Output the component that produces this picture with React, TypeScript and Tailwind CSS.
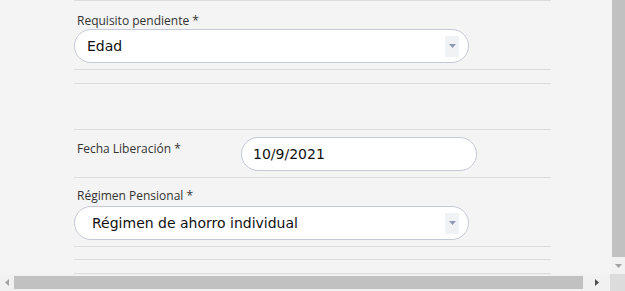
const Line = ({ className = "" }: { className?: string }) => (
  <div className={`h-px w-[477px] bg-[#dcdcdc] ${className}`} />
);

const Label = ({ children, className = "" }: { children: React.ReactNode; className?: string }) => (
  <div
    className={`h-4 pl-[3px] text-[12px] leading-4 text-[#333] ${className}`}
    style={{ fontFamily: '"Open Sans", sans-serif' }}
  >
    {children}
  </div>
);

const Select = ({ value, padLeft }: { value: string; padLeft: string }) => (
  <div
    className={`flex h-[34px] w-[395px] items-center justify-between rounded-full border border-[#c5c9d6] bg-white ${padLeft} pr-[9px]`}
  >
    <span className="text-[14px] text-[#111]" style={{ fontFamily: '"DejaVu Sans", Verdana, sans-serif' }}>
      {value}
    </span>
    <span className="flex h-[21px] w-[14px] items-center justify-center bg-[#f1f2f4]">
      <svg width="7" height="4" viewBox="0 0 7 4">
        <path d="M0 0h7L3.5 4z" fill="#8e9ab5" />
      </svg>
    </span>
  </div>
);

export default function App() {
  return (
    <div className="flex h-[291px] w-[625px] flex-col overflow-hidden bg-[#f4f4f4]">
      <div className="flex h-[274px]">
        <div className="flex-1 pl-[74px]">
          <Line />
          <Label className="mt-[12px]">Requisito pendiente *</Label>
          <Select value="Edad" padLeft="pl-[12px]" />
          <Line className="mt-[6px]" />
          <Line className="mt-[13px]" />
          <Line className="mt-[45px]" />
          <div className="flex h-[41px] w-[477px]">
            <Label className="mt-[11px] w-[167px]">Fecha Liberación *</Label>
            <div className="mt-[7px] flex h-[34px] w-[236px] items-center rounded-full border border-[#c5c9d6] bg-white pl-[11px]">
              <span className="text-[14px] text-[#111]" style={{ fontFamily: '"DejaVu Sans", Verdana, sans-serif' }}>
                10/9/2021
              </span>
            </div>
          </div>
          <Line className="mt-[6px]" />
          <Label className="mt-[10px]">Régimen Pensional *</Label>
          <div className="mt-[2px]">
            <Select value="Régimen de ahorro individual" padLeft="pl-[17px]" />
          </div>
          <Line className="mt-[6px]" />
          <Line className="mt-[12px]" />
          <Line className="mt-[13px]" />
        </div>
        <div className="flex w-[15px] flex-col pl-[2px]">
          <div className="flex-1 bg-[#c1c1c1]" />
          <div className="flex h-[17px] items-center justify-center bg-[#f1f1f1]">
            <svg width="7" height="4" viewBox="0 0 7 4">
              <path d="M0 0h7L3.5 4z" fill="#a3a3a3" />
            </svg>
          </div>
        </div>
      </div>
      <div className="flex h-[17px] bg-[#f1f1f1]">
        <div className="flex w-[14px] items-center justify-center">
          <svg width="4" height="7" viewBox="0 0 4 7">
            <path d="M4 0v7L0 3.5z" fill="#a3a3a3" />
          </svg>
        </div>
        <div className="mt-[2px] h-[13px] w-[569px] bg-[#c1c1c1]" />
        <div className="flex w-[27px] items-center justify-center">
          <svg width="4" height="7" viewBox="0 0 4 7">
            <path d="M0 0v7L4 3.5z" fill="#505050" />
          </svg>
        </div>
        <div className="w-[15px] bg-[#dcdcdc]" />
      </div>
    </div>
  );
}
